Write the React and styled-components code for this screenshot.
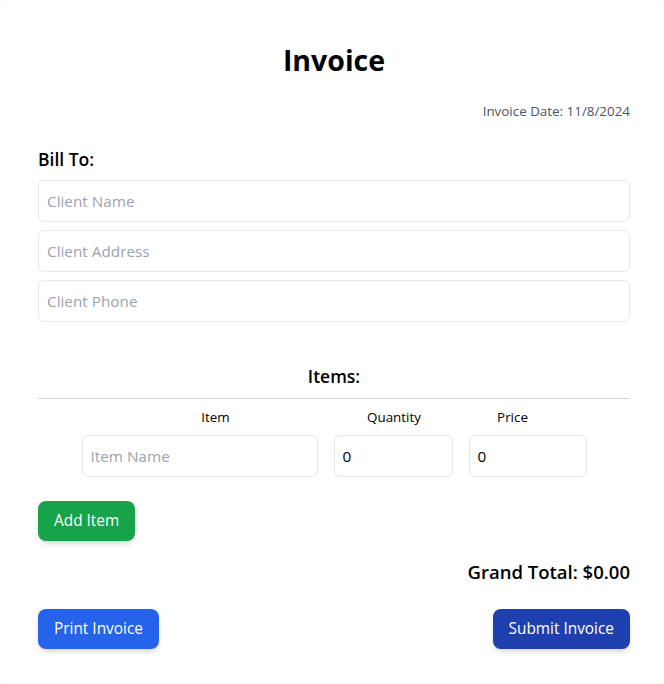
import React from "react";
import styled, { createGlobalStyle } from "styled-components";

const Global = createGlobalStyle`
  html, body { margin: 0; padding: 0; background: #ffffff; }
  body { font-family: "Segoe UI", "Open Sans", "Noto Sans", sans-serif; color: #000; }
  * { box-sizing: border-box; }
`;

const Card = styled.div`
  background: #fff;
  border-radius: 8px;
  box-shadow: 0 0 2px rgba(0, 0, 0, 0.06);
  padding: 42px 34px 36px 38px;
  min-height: 684px;
`;

const Title = styled.h1`
  margin: 0;
  text-align: center;
  font-size: 28.5px;
  line-height: 36px;
  font-weight: 700;
`;

const DateLine = styled.p`
  margin: 23px 0 0;
  text-align: right;
  font-size: 13.4px;
  line-height: 20px;
  color: #4b5563;
`;

const SectionTitle = styled.h2`
  margin: 0;
  font-size: 17.5px;
  line-height: 28px;
  font-weight: 600;
  text-align: ${(p) => (p.$center ? "center" : "left")};
`;

const BillSection = styled.section`
  margin-top: 24px;
  display: flex;
  flex-direction: column;
`;

const Fields = styled.div`
  margin-top: 7px;
  display: flex;
  flex-direction: column;
  gap: 8px;
`;

const TextInput = styled.input`
  display: block;
  width: ${(p) => p.$w || "100%"};
  height: 42px;
  padding: 8px;
  border: 1px solid #e5e7eb;
  border-radius: 6px;
  font-family: inherit;
  font-size: 15.3px;
  line-height: 24px;
  color: #000;
  outline: none;
  &::placeholder { color: #9ca3af; }
`;

const ItemsSection = styled.section`
  margin-top: 40px;
`;

const ItemsHeading = styled(SectionTitle)`
  padding-bottom: 8px;
  border-bottom: 1px solid #d1d5db;
`;

const HeaderRow = styled.div`
  display: flex;
  justify-content: center;
  gap: 16px;
  margin-top: 8px;
`;

const HeaderCell = styled.div`
  width: ${(p) => p.$w}px;
  text-align: center;
  font-size: 13.4px;
  line-height: 20px;
`;

const ItemRow = styled.div`
  display: flex;
  justify-content: center;
  gap: 16px;
  margin-top: 8px;
`;

const Button = styled.button`
  border: none;
  border-radius: 8px;
  padding: 8px 16px;
  height: 40px;
  font-family: inherit;
  font-size: 15.4px;
  line-height: 24px;
  color: #fff;
  background: ${(p) => p.$bg};
  box-shadow: 0 4px 6px -1px rgba(0, 0, 0, 0.12), 0 2px 4px -2px rgba(0, 0, 0, 0.1);
  cursor: pointer;
`;

const AddRow = styled.div`
  margin-top: 24px;
`;

const Total = styled.div`
  margin-top: 17px;
  text-align: right;
  font-size: 18.5px;
  line-height: 28px;
  font-weight: 600;
`;

const Actions = styled.div`
  margin-top: 23px;
  display: flex;
  justify-content: space-between;
`;

export default function App() {
  return (
    <>
      <Global />
      <Card>
        <Title>Invoice</Title>
        <DateLine>Invoice Date: 11/8/2024</DateLine>
        <BillSection>
          <SectionTitle>Bill To:</SectionTitle>
          <Fields>
            <TextInput placeholder="Client Name" />
            <TextInput placeholder="Client Address" />
            <TextInput placeholder="Client Phone" />
          </Fields>
        </BillSection>
        <ItemsSection>
          <ItemsHeading $center>Items:</ItemsHeading>
          <HeaderRow>
            <HeaderCell $w={205}>Item</HeaderCell>
            <HeaderCell $w={120}>Quantity</HeaderCell>
            <HeaderCell $w={85}>Price</HeaderCell>
          </HeaderRow>
          <ItemRow>
            <TextInput $w="236px" placeholder="Item Name" />
            <TextInput $w="119px" defaultValue="0" />
            <TextInput $w="118px" defaultValue="0" />
          </ItemRow>
        </ItemsSection>
        <AddRow>
          <Button $bg="#16a34a">Add Item</Button>
        </AddRow>
        <Total>Grand Total: $0.00</Total>
        <Actions>
          <Button $bg="#2563eb">Print Invoice</Button>
          <Button $bg="#1e40af">Submit Invoice</Button>
        </Actions>
      </Card>
    </>
  );
}
